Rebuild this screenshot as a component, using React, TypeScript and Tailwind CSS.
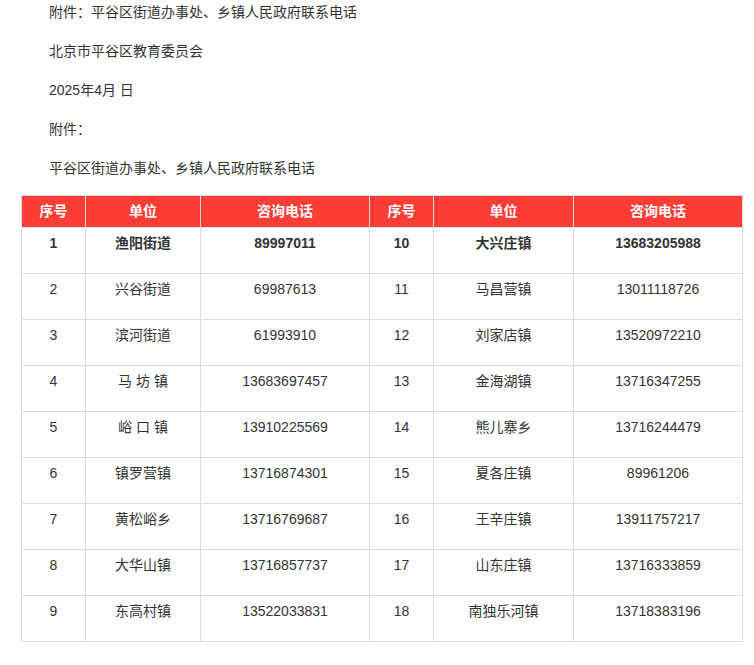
const left = [
  ['1', '渔阳街道', '89997011'],
  ['2', '兴谷街道', '69987613'],
  ['3', '滨河街道', '61993910'],
  ['4', '马 坊 镇', '13683697457'],
  ['5', '峪 口 镇', '13910225569'],
  ['6', '镇罗营镇', '13716874301'],
  ['7', '黄松峪乡', '13716769687'],
  ['8', '大华山镇', '13716857737'],
  ['9', '东高村镇', '13522033831'],
]
const right = [
  ['10', '大兴庄镇', '13683205988'],
  ['11', '马昌营镇', '13011118726'],
  ['12', '刘家店镇', '13520972210'],
  ['13', '金海湖镇', '13716347255'],
  ['14', '熊儿寨乡', '13716244479'],
  ['15', '夏各庄镇', '89961206'],
  ['16', '王辛庄镇', '13911757217'],
  ['17', '山东庄镇', '13716333859'],
  ['18', '南独乐河镇', '13718383196'],
]
const paras = ['附件：平谷区街道办事处、乡镇人民政府联系电话', '北京市平谷区教育委员会', '2025年4月 日', '附件：', '平谷区街道办事处、乡镇人民政府联系电话']
const heads = ['序号', '单位', '咨询电话', '序号', '单位', '咨询电话']
const widths = ['w-[64px]', 'w-[115px]', 'w-[169px]', 'w-[64px]', 'w-[140px]', 'w-[169px]']

export default function App() {
  return (
    <div className="w-[754px] h-[665px] bg-white text-[#333] text-[14px] overflow-hidden" style={{ fontFamily: '"Liberation Sans", "Noto Sans CJK SC", sans-serif' }}>
      <div className="pl-[49px] pt-[2px]">
        {paras.map((p) => (
          <div key={p} className="h-[39px] leading-[20px]">{p}</div>
        ))}
      </div>
      <table className="ml-[21px] mt-[-2px] border-collapse table-fixed w-[721px]">
        <thead>
          <tr className="bg-[#ff3d37] text-white font-bold">
            {heads.map((h, i) => (
              <th key={i} className={`${widths[i]} h-[32px] border border-[#ddd] text-center`}>{h}</th>
            ))}
          </tr>
        </thead>
        <tbody>
          {left.map((l, r) => (
            <tr key={r} className={r === 0 ? 'font-bold' : ''}>
              {[...l, ...right[r]].map((c, i) => (
                <td key={i} className="h-[46px] border border-[#ddd] text-center align-top pt-[5px] leading-[20px]">{c}</td>
              ))}
            </tr>
          ))}
        </tbody>
      </table>
    </div>
  )
}
